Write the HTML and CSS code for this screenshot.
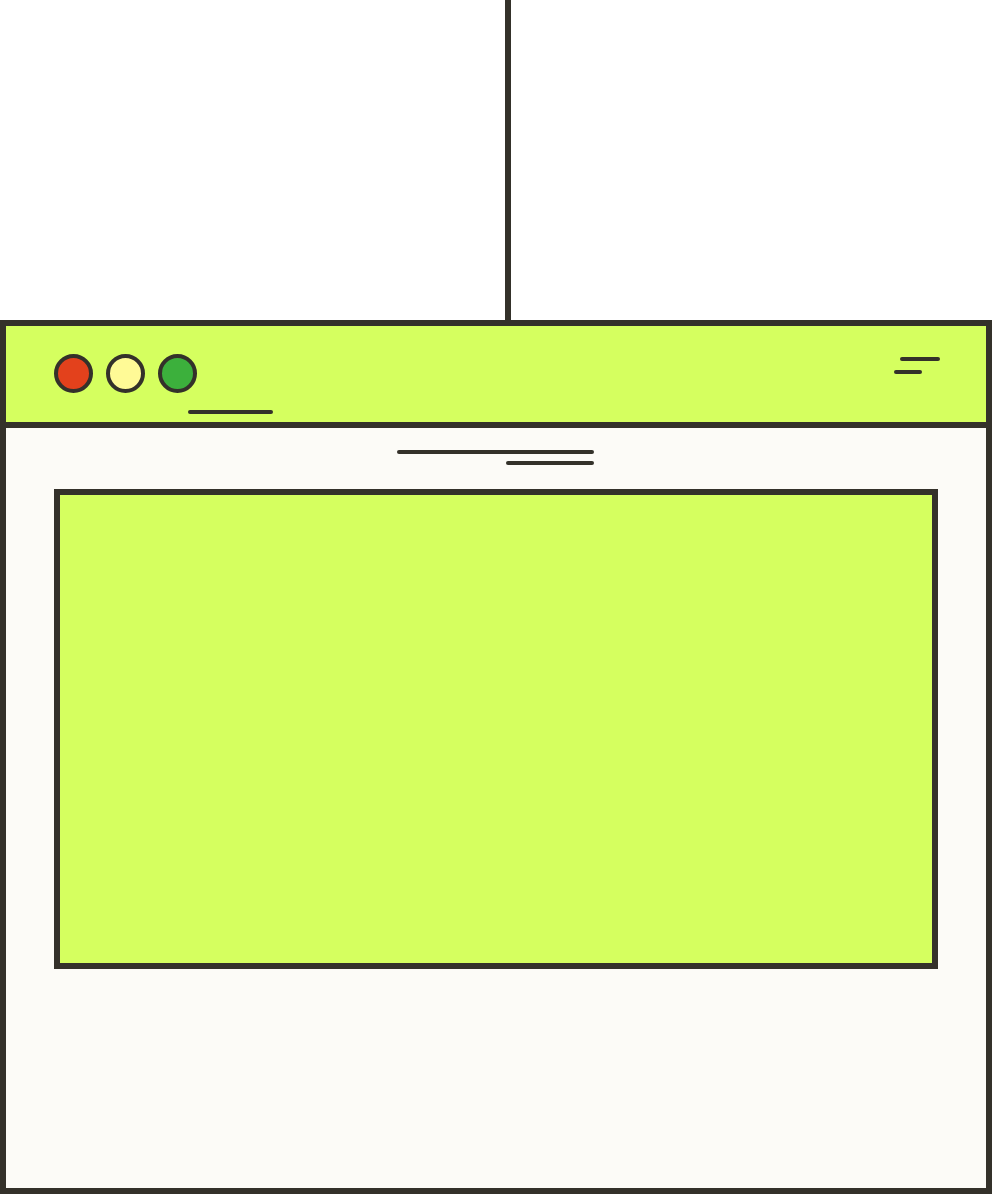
FILE: index.html
```html
<!DOCTYPE html>
<html lang="en">
<head>
<meta charset="utf-8">
<title>Window</title>
<link rel="stylesheet" href="styles.css">
</head>
<body>
<div class="cord"></div>
<div class="window">
  <div class="titlebar">
    <div class="left">
      <div class="dots">
        <span class="dot red"></span>
        <span class="dot yellow"></span>
        <span class="dot green"></span>
      </div>
      <div class="tab-line"></div>
    </div>
    <div class="menu">
      <span class="bar long"></span>
      <span class="bar short"></span>
    </div>
  </div>
  <div class="content">
    <div class="heading">
      <span class="bar wide"></span>
      <span class="bar narrow"></span>
    </div>
    <div class="panel"></div>
  </div>
</div>
</body>
</html>
```
FILE: styles.css
```css
html, body {
  margin: 0;
  padding: 0;
  background: #ffffff;
}
body {
  width: 992px;
  height: 1194px;
  overflow: hidden;
  font-family: "Liberation Sans", Arial, sans-serif;
}
.cord {
  width: 6px;
  height: 320px;
  margin-left: 505px;
  background: #34312a;
}
.window {
  box-sizing: border-box;
  width: 992px;
  height: 874px;
  border: 6px solid #34312a;
  background: #fcfbf7;
  display: flex;
  flex-direction: column;
}
.titlebar {
  box-sizing: border-box;
  height: 102px;
  flex: none;
  background: #d5ff5f;
  border-bottom: 6px solid #34312a;
  display: flex;
  justify-content: space-between;
  padding: 28px 46px 0 48px;
}
.left {
  display: flex;
  flex-direction: column;
}
.dots {
  display: flex;
  gap: 13px;
}
.dot {
  box-sizing: border-box;
  width: 39px;
  height: 39px;
  border-radius: 50%;
  border: 4px solid #34312a;
}
.red { background: #e3411c; }
.yellow { background: #fffa96; }
.green { background: #3cb03c; }
.tab-line {
  width: 85px;
  height: 4px;
  border-radius: 2px;
  background: #34312a;
  margin-top: 17px;
  margin-left: 134px;
}
.menu {
  display: flex;
  flex-direction: column;
  align-items: flex-end;
  padding-top: 3px;
  gap: 9px;
}
.bar {
  display: block;
  height: 4px;
  border-radius: 2px;
  background: #34312a;
}
.bar.long { width: 40px; }
.bar.short { width: 28px; margin-right: 18px; }
.content {
  flex: 1;
  padding: 22px 0 0 48px;
  display: flex;
  flex-direction: column;
}
.heading {
  width: 197px;
  margin-left: 343px;
  display: flex;
  flex-direction: column;
  align-items: flex-end;
  gap: 7px;
}
.bar.wide { width: 197px; }
.bar.narrow { width: 88px; }
.panel {
  box-sizing: border-box;
  width: 884px;
  height: 480px;
  margin-top: 24px;
  border: 6px solid #34312a;
  background: #d5ff5f;
}
```
